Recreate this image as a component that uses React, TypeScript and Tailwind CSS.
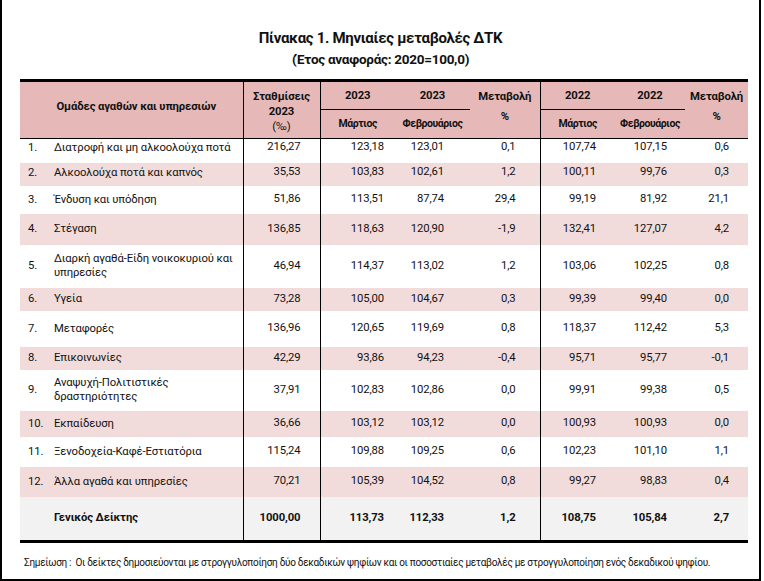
import React from 'react';

type Row = {
    no: string;
    label: React.ReactNode;
    vals: string[];
    h: string;
    bg: string;
    va?: string;
};

const ROWS: Row[] = [
    { no: '1.', label: 'Διατροφή και μη αλκοολούχα ποτά', vals: ['216,27', '123,18', '123,01', '0,1', '107,74', '107,15', '0,6'], h: 'h-[24px]', bg: 'bg-white', va: 'pb-[6px]' },
    { no: '2.', label: 'Αλκοολούχα ποτά και καπνός', vals: ['35,53', '103,83', '102,61', '1,2', '100,11', '99,76', '0,3'], h: 'h-[23px]', bg: 'bg-[#f2dcdb]', va: 'pb-[3px]' },
    { no: '3.', label: 'Ένδυση και υπόδηση', vals: ['51,86', '113,51', '87,74', '29,4', '99,19', '81,92', '21,1'], h: 'h-[28px]', bg: 'bg-white' },
    { no: '4.', label: 'Στέγαση', vals: ['136,85', '118,63', '120,90', '-1,9', '132,41', '127,07', '4,2'], h: 'h-[31px]', bg: 'bg-[#f2dcdb]' },
    { no: '5.', label: <>Διαρκή αγαθά-Είδη νοικοκυριού και<br />υπηρεσίες</>, vals: ['46,94', '114,37', '113,02', '1,2', '103,06', '102,25', '0,8'], h: 'h-[43px]', bg: 'bg-white' },
    { no: '6.', label: 'Υγεία', vals: ['73,28', '105,00', '104,67', '0,3', '99,39', '99,40', '0,0'], h: 'h-[23px]', bg: 'bg-[#f2dcdb]' },
    { no: '7.', label: 'Μεταφορές', vals: ['136,96', '120,65', '119,69', '0,8', '118,37', '112,42', '5,3'], h: 'h-[36px]', bg: 'bg-white' },
    { no: '8.', label: 'Επικοινωνίες', vals: ['42,29', '93,86', '94,23', '-0,4', '95,71', '95,77', '-0,1'], h: 'h-[23px]', bg: 'bg-[#f2dcdb]' },
    { no: '9.', label: <>Αναψυχή-Πολιτιστικές<br />δραστηριότητες</>, vals: ['37,91', '102,83', '102,86', '0,0', '99,91', '99,38', '0,5'], h: 'h-[41px]', bg: 'bg-white' },
    { no: '10.', label: 'Εκπαίδευση', vals: ['36,66', '103,12', '103,12', '0,0', '100,93', '100,93', '0,0'], h: 'h-[26px]', bg: 'bg-[#f2dcdb]' },
    { no: '11.', label: 'Ξενοδοχεία-Καφέ-Εστιατόρια', vals: ['115,24', '109,88', '109,25', '0,6', '102,23', '101,10', '1,1'], h: 'h-[30px]', bg: 'bg-white' },
    { no: '12.', label: 'Άλλα αγαθά και υπηρεσίες', vals: ['70,21', '105,39', '104,52', '0,8', '99,27', '98,83', '0,4'], h: 'h-[30px]', bg: 'bg-[#f2dcdb]' },
];

const TOTAL = ['1000,00', '113,73', '112,33', '1,2', '108,75', '105,84', '2,7'];

// right padding per value column, so the figures line up as in the sheet
const PAD = [
    'pr-[19px] border-l border-r border-black',
    'pr-[11px]',
    'pr-[26px]',
    'pr-[24px]',
    'pr-[19px] border-l border-black',
    'pr-[18px]',
    'pr-[19px]',
];

const FONT = { fontFamily: 'Roboto, "Noto Sans", sans-serif' };

export default function App() {
    return (
        <div className="w-[764px] h-[581px] bg-white" style={FONT}>
            <div className="w-[761px] h-[581px] border-l-2 border-r-2 border-b-2 border-black text-[#111]">
                <div className="pt-[27px] flex flex-col items-center">
                    <div className="text-[15px] leading-[22px] font-bold tracking-[-0.02em]">Πίνακας 1. Μηνιαίες μεταβολές ΔΤΚ</div>
                    <div className="text-[13.5px] leading-[20px] font-bold tracking-[-0.02em]">(Έτος αναφοράς: 2020=100,0)</div>
                </div>

                <table className="mt-[10px] ml-[18px] w-[728px] table-fixed border-collapse text-[11.3px] tracking-[-0.01em]">
                    <colgroup>
                        <col className="w-[223px]" />
                        <col className="w-[77px]" />
                        <col className="w-[75px]" />
                        <col className="w-[75px]" />
                        <col className="w-[70px]" />
                        <col className="w-[75px]" />
                        <col className="w-[70px]" />
                        <col className="w-[63px]" />
                    </colgroup>
                    <thead className="bg-[#e6b9b8] font-bold">
                        <tr className="h-[29px] border-t-[3px] border-black">
                            <th rowSpan={2} className="border-r border-black font-bold text-center pl-[10px] pb-[6px]">Ομάδες αγαθών και υπηρεσιών</th>
                            <th rowSpan={2} className="border-r border-black font-bold leading-[15px] pt-[2px]">Σταθμίσεις<br />2023<br /><span className="font-normal">(‰)</span></th>
                            <th className="font-bold pt-[2px]">2023</th>
                            <th className="font-bold pt-[2px]">2023</th>
                            <th rowSpan={2} className="font-bold leading-[20px] pb-[6px]">Μεταβολή<br />%</th>
                            <th className="font-bold pt-[2px] border-l border-black">2022</th>
                            <th className="font-bold pt-[2px]">2022</th>
                            <th rowSpan={2} className="font-bold leading-[20px] pb-[6px]">Μεταβολή<br />%</th>
                        </tr>
                        <tr className="h-[29px] border-b border-black text-[10.5px] tracking-[-0.04em]">
                            <th className="border-t border-black font-bold">Μάρτιος</th>
                            <th className="border-t border-black font-bold">Φεβρουάριος</th>
                            <th className="border-t border-l border-black font-bold">Μάρτιος</th>
                            <th className="border-t border-black font-bold">Φεβρουάριος</th>
                        </tr>
                    </thead>
                    <tbody>
                        {ROWS.map((r) => (
                            <tr key={r.no} className={`${r.h} ${r.bg}`}>
                                <td className={`p-0 ${r.va ?? ''}`}>
                                    <div className="flex items-center leading-[14px]">
                                        <span className="w-[34px] pl-[8px] shrink-0">{r.no}</span>
                                        <span>{r.label}</span>
                                    </div>
                                </td>
                                {r.vals.map((v, i) => (
                                    <td key={i} className={`text-right p-0 ${PAD[i]} ${r.va ?? ''}`}>{v}</td>
                                ))}
                            </tr>
                        ))}
                        <tr className="h-[45px] bg-[#f2f2f2] font-bold border-b-[3px] border-black">
                            <td className="pl-[34px]">Γενικός Δείκτης</td>
                            {TOTAL.map((v, i) => (
                                <td key={i} className={`text-right p-0 ${PAD[i]}`}>{v}</td>
                            ))}
                        </tr>
                    </tbody>
                </table>

                <p className="mt-[12px] pl-[22px] text-[10px] tracking-[-0.03em]">
                    Σημείωση :&nbsp; Οι δείκτες δημοσιεύονται με στρογγυλοποίηση δύο δεκαδικών ψηφίων και οι ποσοστιαίες μεταβολές με στρογγυλοποίηση ενός δεκαδικού ψηφίου.
                </p>
            </div>
        </div>
    );
}
